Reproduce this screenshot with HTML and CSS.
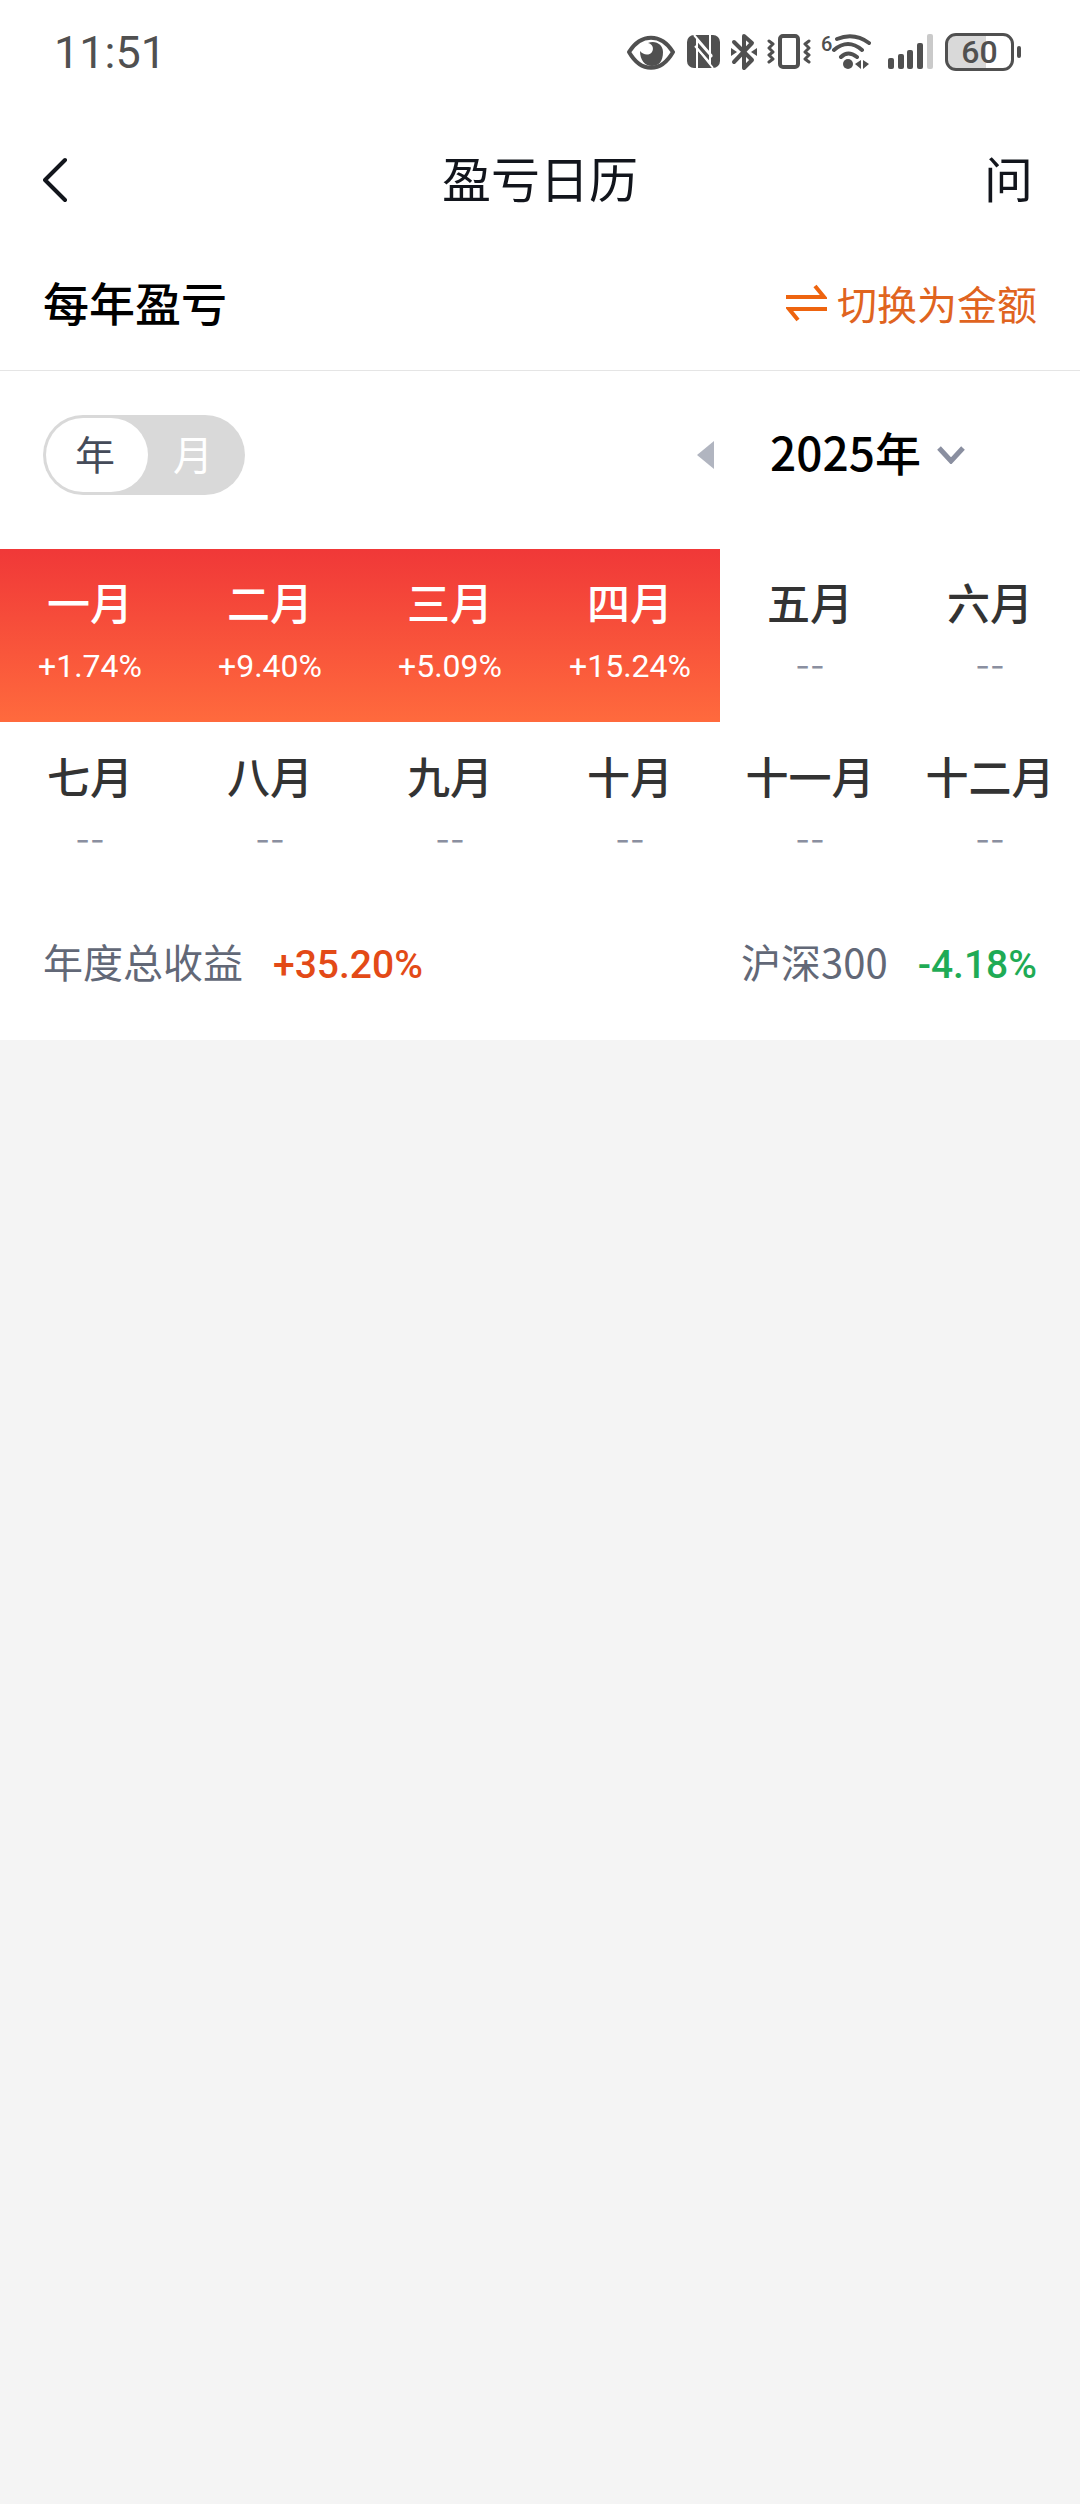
FILE: index.html
```html
<!DOCTYPE html>
<html lang="zh-CN">

<head>
    <meta charset="UTF-8">
    <meta name="viewport" content="width=device-width, initial-scale=1">
    <title>盈亏日历</title>
    <link rel="stylesheet" href="styles.css">
</head>

<body>
    <div class="panel">
        <!-- 状态栏 -->
        <div class="status-bar">
            <span class="clock">11:51</span>
            <div class="status-icons">
                <svg width="50" height="40" viewBox="0 0 50 40">
                    <path d="M2 20C14 1 34 1 46 20C34 41 14 41 2 20Z" fill="none" stroke="#505050" stroke-width="4" stroke-linejoin="round" />
                    <path d="M21 11C29 8 36 13 36 20C36 29 32 34 25 34C18 34 13 28 13 19C16 23 22 24 25 20C27 17 26 12 21 11Z" fill="#505050" />
                </svg>
                <svg width="34" height="40" viewBox="0 0 34 40">
                    <rect x="0" y="3" width="33" height="33" rx="7" fill="#505050" />
                    <path d="M10 36V8L25 25M23 3V31L8 14" fill="none" stroke="#fff" stroke-width="2" />
                    <path d="M7 3L25 24M10 16L26 36" fill="none" stroke="#fff" stroke-width="2" />
                </svg>
                <svg width="26" height="40" viewBox="0 0 26 40">
                    <path d="M3 10L21 28L13 36V4L21 11L3 30" fill="none" stroke="#505050" stroke-width="4" stroke-linecap="round" stroke-linejoin="round" />
                    <path d="M0 16L6 20L0 24ZM26 16L20 20L26 24Z" fill="#505050" />
                </svg>
                <svg width="44" height="40" viewBox="0 0 44 40">
                    <rect x="13" y="4" width="18" height="31" rx="3" fill="none" stroke="#505050" stroke-width="4" />
                    <path d="M2 9L6 12L2 16L6 20L2 23L6 27L2 30M42 9L38 12L42 16L38 20L42 23L38 27L42 30" fill="none" stroke="#505050" stroke-width="3" stroke-linecap="round" stroke-linejoin="round" />
                </svg>
                <svg width="50" height="40" viewBox="0 0 50 40">
                    <text class="wifi-gen" x="0" y="19">6</text>
                    <path d="M16 7Q33 0 48 11M13 18Q27 6 41 18M20 25Q27 18 36 25" fill="none" stroke="#505050" stroke-width="4" stroke-linecap="round" />
                    <circle cx="27" cy="32" r="5" fill="#505050" />
                    <path d="M40 28V37L34 32ZM42 28V37L48 32Z" fill="#505050" />
                </svg>
                <svg width="54" height="40" viewBox="0 0 54 40">
                    <g fill="#505050">
                        <rect x="7" y="26" width="6" height="11" rx="2" />
                        <rect x="17" y="22" width="6" height="15" rx="2" />
                        <rect x="26" y="18" width="6" height="19" rx="2" />
                        <rect x="36" y="11" width="6" height="26" rx="2" />
                    </g>
                    <rect x="46" y="2" width="6" height="35" rx="2" fill="#cacaca" />
                </svg>
                <div class="battery">
                    <span class="battery-body">60</span>
                    <span class="battery-cap"></span>
                </div>
            </div>
        </div>

        <header class="navbar">
            <button class="nav-back" type="button" aria-label="返回">
                <svg width="28" height="48" viewBox="3 0 28 48">
                    <path d="M25 4L5 24L25 44" fill="none" stroke="#12151c" stroke-width="4" stroke-linecap="round" stroke-linejoin="round" />
                </svg>
            </button>
            <h1>盈亏日历</h1>
            <button class="nav-ask" type="button">问</button>
        </header>

        <div class="section-head">
            <h2>每年盈亏</h2>
            <button class="switch-btn" type="button">
                <svg width="41" height="38" viewBox="0 0 41 38">
                    <path d="M0 13H38L29 2M41 25H3L12 36" fill="none" stroke="#ee640f" stroke-width="4" />
                </svg>
                切换为金额
            </button>
        </div>

        <div class="toolbar">
            <div class="toggle">
                <button class="toggle-item active" type="button" aria-pressed="true">年</button>
                <button class="toggle-item" type="button" aria-pressed="false">月</button>
            </div>
            <div class="year-picker">
                <button class="prev-year" type="button" aria-label="上一年">
                    <svg width="17" height="28" viewBox="0 0 17 28">
                        <path d="M17 0V28L0 14Z" fill="#b1b5c0" />
                    </svg>
                </button>
                <label class="year-label">
                    <select class="year-select" aria-label="年份">
                        <option>2025年</option>
                    </select>
                    <svg width="28" height="18" viewBox="0 0 28 18">
                        <path d="M2 2L14 15L26 2" fill="none" stroke="#8a8fa0" stroke-width="5" />
                    </svg>
                </label>
            </div>
        </div>

        <div class="months">
            <div class="month up"><span class="name">一月</span><span class="rate">+1.74%</span></div>
            <div class="month up"><span class="name">二月</span><span class="rate">+9.40%</span></div>
            <div class="month up"><span class="name">三月</span><span class="rate">+5.09%</span></div>
            <div class="month up"><span class="name">四月</span><span class="rate">+15.24%</span></div>
            <div class="month"><span class="name">五月</span><span class="rate">--</span></div>
            <div class="month"><span class="name">六月</span><span class="rate">--</span></div>
            <div class="month"><span class="name">七月</span><span class="rate">--</span></div>
            <div class="month"><span class="name">八月</span><span class="rate">--</span></div>
            <div class="month"><span class="name">九月</span><span class="rate">--</span></div>
            <div class="month"><span class="name">十月</span><span class="rate">--</span></div>
            <div class="month"><span class="name">十一月</span><span class="rate">--</span></div>
            <div class="month"><span class="name">十二月</span><span class="rate">--</span></div>
        </div>

        <div class="summary">
            <div class="summary-item">年度总收益 <b class="gain">+35.20%</b></div>
            <div class="summary-item">沪深300 <b class="loss">-4.18%</b></div>
        </div>
    </div>
</body>

</html>
```
FILE: styles.css
```css
* {
    box-sizing: border-box;
}

body {
    margin: 0;
    background: #f4f4f4;
    font-family: "Noto Sans CJK SC", sans-serif;
    color: #000;
}

h1,
h2 {
    margin: 0;
    font-weight: 500;
}

button,
select {
    margin: 0;
    padding: 0;
    border: none;
    background: none;
    font-family: inherit;
    color: inherit;
    cursor: pointer;
}

svg {
    display: block;
    flex: none;
}

.panel {
    background: #fff;
}

/* 状态栏 */
.status-bar {
    display: flex;
    justify-content: space-between;
    align-items: center;
    height: 104px;
    padding: 0 59px 0 54px;
    color: #505050;
    font-family: Roboto, sans-serif;
}

.clock {
    font-size: 45px;
}

.status-icons {
    display: flex;
    align-items: center;
    gap: 10px;
}

.wifi-gen {
    font-size: 20px;
    font-weight: 500;
    fill: #505050;
}

.battery {
    display: flex;
    align-items: center;
    gap: 3px;
}

.battery-body {
    width: 69px;
    height: 38px;
    border: 3px solid #505050;
    border-radius: 11px;
    background: linear-gradient(to right, #d9d9d9 60%, #fff 60%);
    font-size: 32px;
    font-weight: 500;
    line-height: 32px;
    text-align: center;
}

.battery-cap {
    width: 4px;
    height: 12px;
    border-radius: 2px;
    background: #505050;
}

/* 导航 */
.navbar {
    display: grid;
    grid-template-columns: 1fr auto 1fr;
    align-items: center;
    height: 152px;
    padding: 0 43px;
    color: #12151c;
}

.navbar h1 {
    padding-bottom: 8px;
    font-size: 49px;
    font-weight: 400;
}

.nav-back {
    justify-self: start;
}

.nav-ask {
    justify-self: end;
    padding: 0 4px 8px 0;
    font-size: 49px;
}

.section-head {
    display: flex;
    justify-content: space-between;
    align-items: center;
    height: 115px;
    padding: 0 43px 20px;
    border-bottom: 1px solid #e5e5e5;
}

.section-head h2 {
    padding-bottom: 4px;
    font-size: 46px;
}

.switch-btn {
    display: flex;
    align-items: center;
    gap: 10px;
    font-size: 40px;
    color: #e0641f;
}

.toolbar {
    display: flex;
    justify-content: space-between;
    align-items: center;
    padding: 44px 115px 54px 43px;
}

.toggle {
    display: flex;
    width: 202px;
    height: 80px;
    padding: 3px;
    border-radius: 40px;
    background: #d9d9d9;
}

.toggle-item {
    flex: 1;
    padding: 0 4px 4px 0;
    border-radius: 37px;
    font-size: 40px;
    line-height: 70px;
    color: #fff;
}

.toggle-item.active {
    flex: none;
    width: 102px;
    background: #fff;
    color: #454b59;
}

.year-picker,
.year-label {
    display: flex;
    align-items: center;
}

.year-picker {
    gap: 56px;
}

.year-label {
    gap: 16px;
}

.year-select {
    appearance: none;
    padding-bottom: 8px;
    font-size: 46px;
    font-weight: 500;
}

/* 月份 */
.months {
    display: grid;
    grid-template-columns: repeat(6, 1fr);
    row-gap: 1px;
}

.month {
    display: flex;
    flex-direction: column;
    align-items: center;
    gap: 18px;
    padding: 25px 0 36px;
}

.month .name {
    font-size: 43px;
    font-weight: 500;
    line-height: 54px;
    color: #333;
    white-space: nowrap;
}

.month .rate {
    font-family: Inter, sans-serif;
    font-size: 32px;
    line-height: 40px;
    color: #8a8fa0;
}

.month.up {
    background: linear-gradient(#f03838, #ff6a3d);
}

.month.up .name,
.month.up .rate {
    color: #fff;
}

.month.up .rate {
    font-family: Roboto, sans-serif;
}

.summary {
    display: flex;
    justify-content: space-between;
    padding: 37px 43px 51px;
}

.summary-item {
    display: flex;
    align-items: center;
    gap: 30px;
    font-size: 40px;
    line-height: 56px;
    color: #626877;
}

.summary-item b {
    padding-top: 8px;
    font-family: Roboto, sans-serif;
    font-size: 39px;
    font-weight: 500;
    line-height: 48px;
}

.gain {
    color: #e34a17;
}

.loss {
    color: #1fab55;
}
```
